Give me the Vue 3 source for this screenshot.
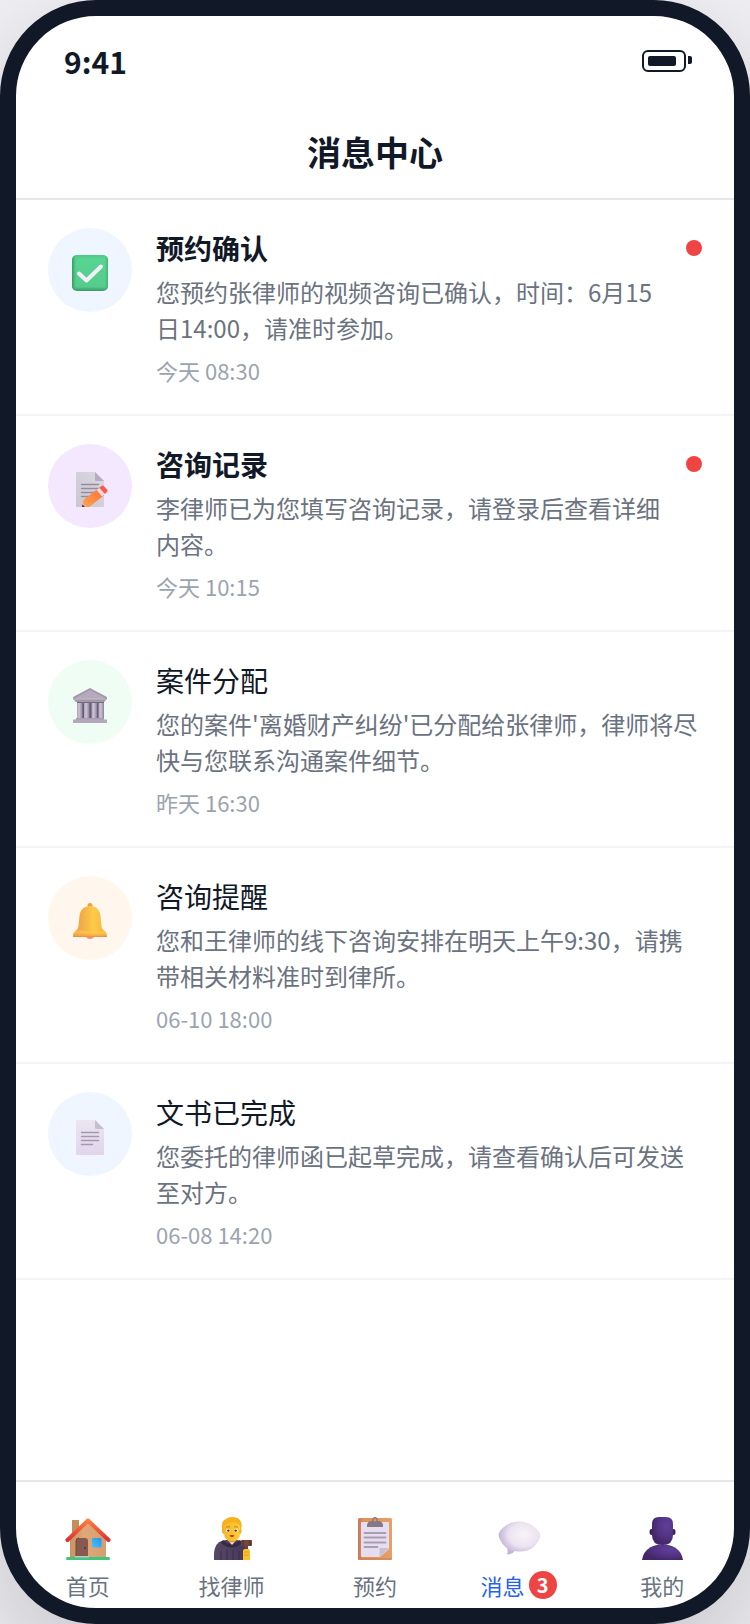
<script setup>
import { ref } from 'vue'

const messages = ref([
  {
    id: 1,
    icon: 'check',
    tone: 'blue',
    title: '预约确认',
    desc: '您预约张律师的视频咨询已确认，时间：6月15日14:00，请准时参加。',
    time: '今天 08:30',
    unread: true
  },
  {
    id: 2,
    icon: 'memo',
    tone: 'purple',
    title: '咨询记录',
    desc: '李律师已为您填写咨询记录，请登录后查看详细内容。',
    time: '今天 10:15',
    unread: true
  },
  {
    id: 3,
    icon: 'bank',
    tone: 'green',
    title: '案件分配',
    desc: "您的案件'离婚财产纠纷'已分配给张律师，律师将尽快与您联系沟通案件细节。",
    time: '昨天 16:30',
    unread: false
  },
  {
    id: 4,
    icon: 'bell',
    tone: 'orange',
    title: '咨询提醒',
    desc: '您和王律师的线下咨询安排在明天上午9:30，请携带相关材料准时到律所。',
    time: '06-10 18:00',
    unread: false
  },
  {
    id: 5,
    icon: 'page',
    tone: 'blue',
    title: '文书已完成',
    desc: '您委托的律师函已起草完成，请查看确认后可发送至对方。',
    time: '06-08 14:20',
    unread: false
  }
])

const tabs = [
  { key: 'home', label: '首页' },
  { key: 'lawyer', label: '找律师' },
  { key: 'booking', label: '预约' },
  { key: 'message', label: '消息', badge: 3 },
  { key: 'mine', label: '我的' }
]

const activeTab = ref('message')
</script>

<template>
  <div class="phone">
    <div class="status-bar">
      <span class="status-bar__time">9:41</span>
      <span class="battery"><span class="battery__level"></span></span>
    </div>

    <header class="header">
      <h1 class="header__title">消息中心</h1>
    </header>

    <main class="content">
      <ul class="message-list">
        <li
          v-for="item in messages"
          :key="item.id"
          class="message"
          :class="{ 'message--unread': item.unread }"
        >
          <div class="message__icon" :class="`message__icon--${item.tone}`">
            <svg v-if="item.icon === 'check'" viewBox="0 0 40 40" aria-hidden="true">
              <defs>
                <linearGradient id="check-v" x1="0" y1="0" x2="0" y2="1">
                  <stop offset="0" stop-color="#4fc98a" />
                  <stop offset="0.12" stop-color="#58d492" />
                  <stop offset="0.88" stop-color="#55cc8b" />
                  <stop offset="1" stop-color="#3a9a63" />
                </linearGradient>
                <linearGradient id="check-h" x1="0" y1="0" x2="1" y2="0">
                  <stop offset="0" stop-color="#359a60" />
                  <stop offset="0.12" stop-color="#3fae70" stop-opacity="0" />
                  <stop offset="0.92" stop-color="#3fae70" stop-opacity="0" />
                  <stop offset="1" stop-color="#46b578" />
                </linearGradient>
              </defs>
              <rect x="2" y="2" width="36" height="36" rx="5" fill="url(#check-v)" />
              <rect x="2" y="2" width="36" height="36" rx="5" fill="url(#check-h)" />
              <path d="M9 20.5l7.5 7L31 13.5" fill="none" stroke="#f3effa" stroke-width="4" stroke-linecap="round" stroke-linejoin="round" />
            </svg>

            <svg v-else-if="item.icon === 'memo'" viewBox="0 0 40 40" aria-hidden="true">
              <defs>
                <linearGradient id="memo-paper" x1="1" y1="0" x2="0" y2="1">
                  <stop offset="0" stop-color="#dcd8e3" />
                  <stop offset="1" stop-color="#cbc7d1" />
                </linearGradient>
                <linearGradient id="memo-pencil" x1="1" y1="0" x2="0" y2="1">
                  <stop offset="0" stop-color="#ff7038" />
                  <stop offset="1" stop-color="#ffa34d" />
                </linearGradient>
              </defs>
              <path d="M7 3h18l9 9v25a1 1 0 0 1-1 1H7a1 1 0 0 1-1-1V4a1 1 0 0 1 1-1z" fill="url(#memo-paper)" />
              <path d="M25 3l9 9h-8a1 1 0 0 1-1-1z" fill="#b3aebb" />
              <path d="M11.5 15.5h17M11.5 19.5h17M11.5 23.5h16M11.5 27.5h10" stroke="#928d99" stroke-width="1.5" stroke-linecap="round" />
              <path d="M13.5 31L28 19.5l6 7L19 38h-6.5z" fill="url(#memo-pencil)" />
              <path d="M13 33.5l4.5 4.5H12z" fill="#f5a878" />
              <path d="M12.4 35.5l2.5 2.5H12z" fill="#4b2442" />
              <path d="M26.5 21l2.8-2.2 5.6 6.2-2.8 2.4z" fill="#e4dbe7" />
              <path d="M29.3 18.8l2.2-1.8q1.5-1 2.8.4l2.8 3.1q1.1 1.4-.1 2.6l-2.1 1.9z" fill="#fa5b4b" />
            </svg>

            <svg v-else-if="item.icon === 'bank'" viewBox="0 0 40 40" aria-hidden="true">
              <defs>
                <linearGradient id="bank-column" x1="0" y1="0" x2="1" y2="0">
                  <stop offset="0" stop-color="#aca3b5" />
                  <stop offset="0.4" stop-color="#cdc5d3" />
                  <stop offset="1" stop-color="#8d829a" />
                </linearGradient>
              </defs>
              <path d="M7 17h27v17H7z" fill="#685b7c" />
              <path d="M7 17h5.5v17H7z" fill="url(#bank-column)" />
              <path d="M14 17h5.5v17H14z" fill="url(#bank-column)" />
              <path d="M21.5 17H27v17h-5.5z" fill="url(#bank-column)" />
              <path d="M28.5 17H34v17h-5.5z" fill="url(#bank-column)" />
              <path d="M7 17h27v1H7z" fill="#75687f" />
              <path d="M20 3l16 8.5q1 .7 1 1.5v1l-3 3H6l-3-3v-1q0-.8 1-1.5z" fill="#a397ac" />
              <path d="M20 5l14 7.5-1 1.5H7l-1-1.5z" fill="#b4aabb" />
              <path d="M4 14h32" stroke="#c6bdcb" stroke-width="1" />
              <path d="M6 33h28v2H6z" fill="#a99eb1" />
              <path d="M3 34.5h34V38H3z" fill="#b4a9bc" />
            </svg>

            <svg v-else-if="item.icon === 'bell'" viewBox="0 0 40 40" aria-hidden="true">
              <defs>
                <linearGradient id="bell-body" x1="0" y1="0" x2="1" y2="0">
                  <stop offset="0" stop-color="#e89a50" />
                  <stop offset="0.3" stop-color="#f4b048" />
                  <stop offset="0.6" stop-color="#fdca48" />
                  <stop offset="1" stop-color="#f5b63e" />
                </linearGradient>
                <linearGradient id="bell-rim" x1="0" y1="0" x2="0" y2="1">
                  <stop offset="0" stop-color="#f2a838" stop-opacity="0.6" />
                  <stop offset="0.4" stop-color="#ffd050" stop-opacity="0.6" />
                  <stop offset="0.8" stop-color="#f3a242" stop-opacity="0.6" />
                  <stop offset="1" stop-color="#ed7f55" />
                </linearGradient>
              </defs>
              <ellipse cx="20" cy="35" rx="4" ry="3" fill="#f59a60" />
              <circle cx="20" cy="4.5" r="2.5" fill="#eda23e" />
              <path d="M20 5c-6 0-10 4-10.5 10L8.5 25c-.4 2.5-1.500 4-3.500 5.500C3.200 32 3 34 3.200 36h33.600c.2-2 0-4-1.800-5.500-2-1.500-3.100-3-3.500-5.500l-1-10C30 9 26 5 20 5z" fill="url(#bell-body)" />
              <path d="M7.500 28q-1 1.400-2.500 2.500C3.200 32 3 34 3.200 36h33.600c.2-2 0-4-1.800-5.500q-1.500-1.100-2.500-2.500-12.500 3-25 0z" fill="url(#bell-rim)" />
            </svg>

            <svg v-else viewBox="0 0 40 40" aria-hidden="true">
              <defs>
                <linearGradient id="page-paper" x1="0" y1="0" x2="0" y2="1">
                  <stop offset="0" stop-color="#ebe5f1" />
                  <stop offset="1" stop-color="#e1d5ec" />
                </linearGradient>
              </defs>
              <path d="M7 3h18l9 9v25a1 1 0 0 1-1 1H7a1 1 0 0 1-1-1V4a1 1 0 0 1 1-1z" fill="url(#page-paper)" />
              <path d="M25 3l9 9h-8a1 1 0 0 1-1-1z" fill="#c6bfce" />
              <path d="M11.5 15.5h17M11.5 19.5h17M11.5 23.5h17M11.5 27.5h11" stroke="#a29aab" stroke-width="1.5" stroke-linecap="round" />
            </svg>
          </div>

          <div class="message__body">
            <h2 class="message__title">{{ item.title }}</h2>
            <p class="message__desc">{{ item.desc }}</p>
            <time class="message__time">{{ item.time }}</time>
          </div>

          <span v-if="item.unread" class="message__dot"></span>
        </li>
      </ul>
    </main>

    <nav class="tab-bar">
      <button
        v-for="tab in tabs"
        :key="tab.key"
        type="button"
        class="tab"
        :class="{ 'tab--active': activeTab === tab.key }"
        @click="activeTab = tab.key"
      >
        <svg v-if="tab.key === 'home'" class="tab__icon" viewBox="0 0 48 48" aria-hidden="true">
          <defs>
            <linearGradient id="home-wall" x1="0" y1="0" x2="1" y2="0">
              <stop offset="0" stop-color="#c9935e" />
              <stop offset="0.4" stop-color="#e0a878" />
              <stop offset="1" stop-color="#d39f70" />
            </linearGradient>
            <linearGradient id="home-roof" x1="0" y1="0" x2="0" y2="1">
              <stop offset="0" stop-color="#ff7d3b" />
              <stop offset="1" stop-color="#dd3038" />
            </linearGradient>
            <linearGradient id="home-window" x1="0" y1="1" x2="1" y2="0">
              <stop offset="0" stop-color="#49c2ff" />
              <stop offset="1" stop-color="#2593e4" />
            </linearGradient>
          </defs>
          <path d="M8 6h7v14H8z" fill="#c58f58" />
          <path d="M24 8L6 25v19h36V25z" fill="url(#home-wall)" />
          <rect x="2" y="43" width="44" height="3" rx="1.5" fill="#3cc878" />
          <path d="M12 43V27q0-3 3-3h6q3 0 3 3v16z" fill="#87594f" />
          <path d="M12 43V27q0-3 3-3" fill="none" stroke="#6b453f" stroke-width="1" />
          <circle cx="21" cy="34" r="1" fill="#593431" />
          <path d="M11 42h14v1.5H11z" fill="#c9c2ce" />
          <rect x="28" y="24" width="9.5" height="9.5" rx="1" fill="url(#home-window)" />
          <path d="M3.5 26L24 6.5 44.5 26" fill="none" stroke="url(#home-roof)" stroke-width="4" stroke-linecap="round" stroke-linejoin="round" />
        </svg>

        <svg v-else-if="tab.key === 'lawyer'" class="tab__icon" viewBox="0 0 48 48" aria-hidden="true">
          <defs>
            <linearGradient id="judge-robe" x1="0" y1="0" x2="1" y2="0">
              <stop offset="0" stop-color="#574865" />
              <stop offset="1" stop-color="#46375b" />
            </linearGradient>
            <linearGradient id="judge-face" x1="0" y1="0" x2="1" y2="0">
              <stop offset="0" stop-color="#f7b62d" />
              <stop offset="1" stop-color="#ffce2e" />
            </linearGradient>
          </defs>
          <path d="M7 46V41Q7 27 19 26h11q11 1 12 14v6z" fill="url(#judge-robe)" />
          <path d="M14 46v-9M20 46V36M26 46V36M32 46v-9" stroke="#3a2d4d" stroke-width="1" />
          <path d="M16 26q8 8 17 0l2 3q-10 9-21 0z" fill="#372b43" />
          <path d="M20 25l5 6 5-6z" fill="#ece6ef" />
          <path d="M20 22h10v4q-5 5-10 0z" fill="#e99c2c" />
          <path d="M15 14q-1-7 4-9 2-2 6-2 5 0 7 2 4 3 2 10v4H16z" fill="#f8b01f" />
          <path d="M17 12q1-2 4-3 5-1 9 0 3 1 3 4v6q0 8-8 8t-8-8z" fill="url(#judge-face)" />
          <path d="M15.5 15q2 0 2 2.5T16 20q-2-3-.5-5zM34 15q-2 0-2 2.5t1.5 2.5q2-3 .5-5z" fill="#f6af28" />
          <circle cx="21" cy="16.5" r="1.8" fill="#fff" />
          <circle cx="29" cy="16.5" r="1.8" fill="#fff" />
          <circle cx="21.3" cy="16.6" r="1.2" fill="#493238" />
          <circle cx="28.7" cy="16.6" r="1.2" fill="#493238" />
          <path d="M19 13.5q2-1.5 4-.5M27 13q2-1 4 .5" fill="none" stroke="#d6742a" stroke-width="1" />
          <path d="M22.5 21.5q2.5-1 5 0-2.5 3-5 0z" fill="#b22b37" />
          <path d="M38 30h3v10h-3z" fill="#6a413c" />
          <rect x="34" y="26" width="11" height="6" rx="1" fill="#71463f" />
          <path d="M36 26v6M43 26v6" stroke="#532e2d" stroke-width="1" />
          <path d="M36 37q0-2 2-2h3q2 0 2 2v9h-7z" fill="#fbc128" />
          <path d="M37 38h5M37 41h5" stroke="#dfa020" stroke-width="1" />
        </svg>

        <svg v-else-if="tab.key === 'booking'" class="tab__icon" viewBox="0 0 48 48" aria-hidden="true">
          <defs>
            <linearGradient id="clip-board" x1="0" y1="0" x2="1" y2="0">
              <stop offset="0" stop-color="#c77557" />
              <stop offset="0.15" stop-color="#dc915b" />
              <stop offset="1" stop-color="#e5a165" />
            </linearGradient>
          </defs>
          <rect x="7" y="4" width="34" height="42" rx="1.5" fill="url(#clip-board)" />
          <path d="M7 45h34" stroke="#cd7b59" stroke-width="1" />
          <path d="M10 9q0-1 1-1h26q1 0 1 1v26l-9 8H11q-1 0-1-1z" fill="#e7ddf0" />
          <path d="M28.5 43.5V35q0-1 1-1H38z" fill="#c9c0d4" />
          <path d="M13.5 19h21M13.5 23.5h21M13.5 28.5h21M13.5 33h13" stroke="#a79fae" stroke-width="1.8" stroke-linecap="round" />
          <path d="M16 12q0-5 5-5 .5-4 3-4t3 4q5 0 5 5v1H16z" fill="#837883" />
          <circle cx="24" cy="6" r="1.5" fill="#df9a66" />
        </svg>

        <svg v-else-if="tab.key === 'message'" class="tab__icon" viewBox="0 0 48 48" aria-hidden="true">
          <defs>
            <radialGradient id="bubble-fill" cx="0.6" cy="0.4" r="0.6">
              <stop offset="0" stop-color="#f8f5f9" />
              <stop offset="0.6" stop-color="#ece3f0" />
              <stop offset="1" stop-color="#c1b3d7" />
            </radialGradient>
          </defs>
          <path d="M24.5 7.500c8 0 14 3.500 19 9.500q3 3.500 1 7.500C41 33 34 37.500 25 37.500q-3 0-5-.5-2 2.500-6 3.500-2 .5-1.500-1.500.5-3-.5-5-5-3.500-7.500-9.500-2-4 .5-7.500C10 11 16.500 7.500 24.500 7.500z" fill="url(#bubble-fill)" />
        </svg>

        <svg v-else class="tab__icon" viewBox="0 0 48 48" aria-hidden="true">
          <defs>
            <radialGradient id="bust-fill" cx="0.7" cy="0.3" r="0.7">
              <stop offset="0" stop-color="#60409a" />
              <stop offset="0.6" stop-color="#523383" />
              <stop offset="1" stop-color="#432769" />
            </radialGradient>
          </defs>
          <path d="M4 46q1-8 8-12.5 5-3 12.5-3t12.5 3Q44 38 45 46z" fill="url(#bust-fill)" />
          <ellipse cx="13.5" cy="18" rx="2" ry="3" fill="#3c215d" />
          <ellipse cx="35.5" cy="18" rx="2" ry="3" fill="#3c215d" />
          <path d="M14 10q0-7 7-7h7q7 0 7 7v11q0 10-10.5 10T14 21z" fill="url(#bust-fill)" />
        </svg>

        <span class="tab__label">
          {{ tab.label }}<span v-if="tab.badge" class="tab__badge">{{ tab.badge }}</span>
        </span>
      </button>
    </nav>
  </div>
</template>

<style>
body {
  margin: 0;
  background: #f0f0f5;
}
</style>

<style scoped>
.phone {
  box-sizing: border-box;
  display: flex;
  flex-direction: column;
  min-height: 100vh;
  border: 16px solid #111827;
  border-radius: 96px;
  background: #fff;
  box-shadow: 0 40px 120px rgba(0, 0, 0, 0.2);
  color: #111827;
  font-family: 'Noto Sans CJK SC', sans-serif;
}

.status-bar {
  display: flex;
  align-items: center;
  justify-content: space-between;
  height: 90px;
  padding: 0 48px;
}

.status-bar__time {
  font-size: 30px;
  font-weight: 600;
}

.battery {
  position: relative;
  box-sizing: border-box;
  width: 44px;
  height: 22px;
  padding: 4px;
  border: 2px solid #111827;
  border-radius: 6px;
}

.battery::after {
  content: '';
  position: absolute;
  top: 4px;
  right: -8px;
  width: 4px;
  height: 8px;
  border-radius: 0 2px 2px 0;
  background: #111827;
}

.battery__level {
  display: block;
  width: 28px;
  height: 10px;
  border-radius: 2px;
  background: #111827;
}

.header {
  padding: 22px 32px;
  border-bottom: 2px solid #e5e7eb;
  text-align: center;
}

.header__title {
  margin: 0;
  font-size: 34px;
  font-weight: 600;
  line-height: 48px;
}

.content {
  flex: 1;
}

.message-list {
  margin: 0;
  padding: 0;
  list-style: none;
}

.message {
  display: flex;
  align-items: flex-start;
  gap: 24px;
  padding: 28px 32px;
  border-bottom: 2px solid #f3f4f6;
}

.message__icon {
  display: flex;
  flex-shrink: 0;
  align-items: center;
  justify-content: center;
  box-sizing: border-box;
  width: 84px;
  height: 84px;
  padding-top: 6px;
  border-radius: 50%;
}

.message__icon svg {
  width: 40px;
  height: 40px;
}

.message__icon--blue {
  background: #eff6ff;
}

.message__icon--purple {
  background: #f3e8ff;
}

.message__icon--green {
  background: #f0fdf4;
}

.message__icon--orange {
  background: #fff7ed;
}

.message__body {
  flex: 1;
  min-width: 0;
}

.message__title {
  margin: 0 0 6px;
  font-size: 28px;
  font-weight: 400;
  line-height: 40px;
}

.message--unread .message__title {
  font-weight: 600;
}

.message__desc {
  margin: 0 0 8px;
  color: #6b7280;
  font-size: 24px;
  line-height: 36px;
}

.message__time {
  display: block;
  color: #9ca3af;
  font-size: 22px;
  line-height: 32px;
}

.message__dot {
  flex-shrink: 0;
  width: 16px;
  height: 16px;
  margin-top: 12px;
  border-radius: 50%;
  background: #ef4444;
}

.tab-bar {
  display: flex;
  border-top: 2px solid #e5e7eb;
}

.tab {
  display: flex;
  flex: 1;
  flex-direction: column;
  align-items: center;
  gap: 8px;
  padding: 32px 0 8px;
  border: 0;
  background: none;
  color: #6b7280;
  font-family: inherit;
  font-size: 22px;
  line-height: 30px;
  cursor: pointer;
}

.tab--active {
  color: #2563eb;
}

.tab__icon {
  width: 48px;
  height: 48px;
}

.tab__label {
  display: flex;
  align-items: center;
  gap: 4px;
}

.tab__badge {
  width: 28px;
  height: 28px;
  border-radius: 50%;
  background: #ef4444;
  color: #fff;
  font-size: 20px;
  font-weight: 600;
  line-height: 28px;
  text-align: center;
}
</style>
